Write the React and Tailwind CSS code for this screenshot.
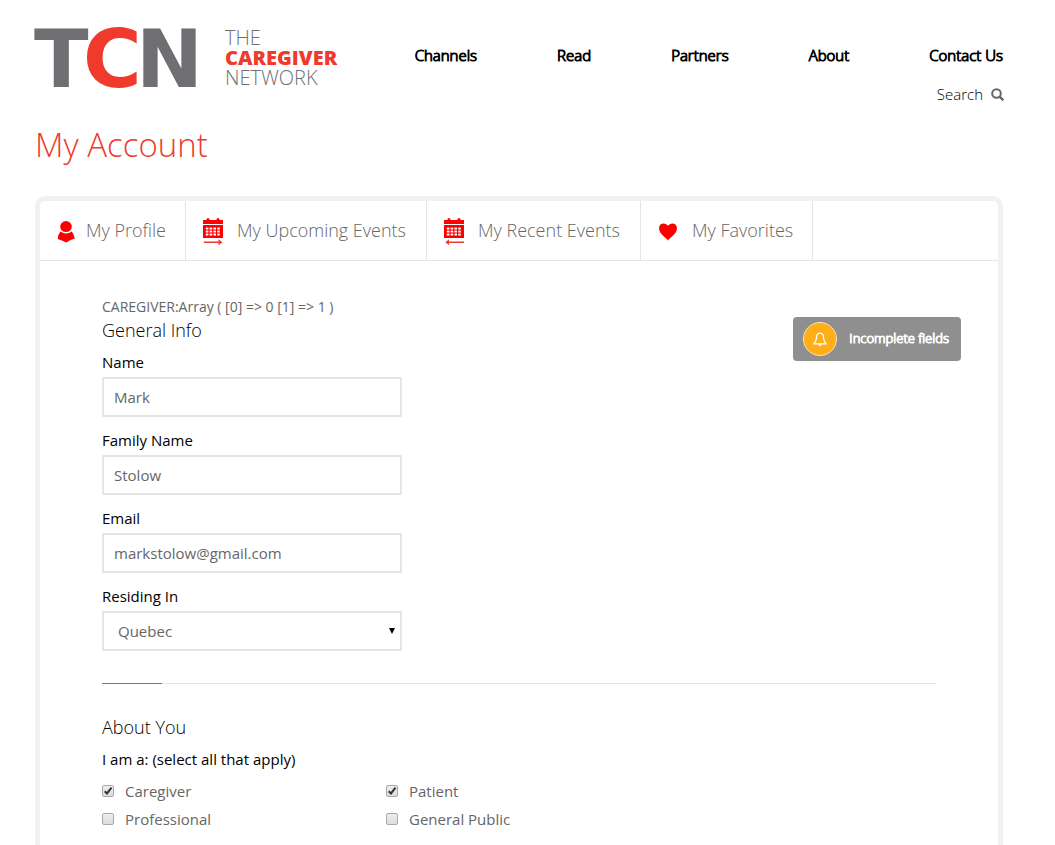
import React from "react";

const NAV = ["Channels", "Read", "Partners", "About", "Contact Us"];

function Logo() {
  return (
    <a href="#" className="flex items-start" aria-label="TCN The Caregiver Network">
      <svg
        width="190"
        height="60"
        viewBox="0 0 190 60"
        className="overflow-visible font-['DejaVu_Sans',sans-serif] text-[80px] font-bold"
        fill="#6f6f73"
      >
        <text x="-1" y="59">T</text>
        <text x="101" y="59">N</text>
        <text x="48" y="59" fill="#f03a2b">C</text>
      </svg>
      <span className="flex flex-col text-[20px] leading-[20px] font-light text-[#6f6f73]">
        <span>THE</span>
        <span className="font-extrabold text-[#f03a2b]">CAREGIVER</span>
        <span>NETWORK</span>
      </span>
    </a>
  );
}

function PersonIcon() {
  return (
    <svg width="18" height="24" viewBox="0 0 18 24" fill="#ff0000">
      <ellipse cx="9" cy="6.600" rx="5.800" ry="5.500" />
      <path d="M3.400 11.600 Q9 15.400 14.700 11.600 Q16.900 14 17.900 18.600 Q13.900 19.800 9.200 22.600 Q4.600 20.200 .7 19 Q1.200 14 3.400 11.600Z" />
    </svg>
  );
}

function CalendarIcon({ back }) {
  const cells = [];
  for (let r = 0; r < 3; r++) {
    for (let c = 0; c < 4; c++) {
      cells.push(<rect key={`${r}-${c}`} x={2.8 + c * 3.8} y={9.6 + r * 3} width="2.600" height="1.900" fill="#fff" />);
    }
  }
  return (
    <svg width="20" height="28" viewBox="0 0 20 28" fill="#ff0000">
      <path d="M0 2h3.500V1.500a1.500 1.500 0 0 1 3 0V2h7V1.500a1.500 1.500 0 0 1 3 0V2H20v4H0z" />
      <path d="M0 7h20v13H0z" />
      {cells}
      {back ? (
        <path fill="#f03a2b" d="M5 21.200v2.300h15v1.400H5v2.300L1.300 24.200z" />
      ) : (
        <path fill="#f03a2b" d="M15.500 21.200v2.300H.8v1.400h14.700v2.300l3.900-3z" />
      )}
    </svg>
  );
}

function HeartIcon() {
  return (
    <svg width="18" height="18" viewBox="0 0 18 18" fill="#ff0000">
      <path d="M9 17.500 C7.500 15 0 11 0 5.300 C0 2.300 2 .4 4.500 .4 C6.500 .4 8.200 1.400 9 3 C9.800 1.400 11.500 .4 13.500 .4 C16 .4 18 2.300 18 5.300 C18 11 10.500 15 9 17.500Z" />
    </svg>
  );
}

const TABS = [
  { label: "My Profile", icon: <PersonIcon />, pad: "gap-[11px] pr-[19px] pl-[17px]" },
  { label: "My Upcoming Events", icon: <CalendarIcon />, pad: "gap-[14px] pr-5 pl-[17px]" },
  { label: "My Recent Events", icon: <CalendarIcon back />, pad: "gap-[14px] pr-5 pl-[17px]" },
  { label: "My Favorites", icon: <HeartIcon />, pad: "gap-[15px] pr-[19px] pl-[18px]" },
];

function Field({ id, label, children }) {
  return (
    <div className="mb-3 flex w-[300px] flex-col">
      <label htmlFor={id} className="h-[26px] text-[15px] leading-[22px] text-black">
        {label}
      </label>
      {children}
    </div>
  );
}

const CONTROL =
  "h-10 w-full rounded-none border-2 border-[#e5e5e5] bg-white text-[15px] text-[#666] outline-none";

function Check({ id, label, checked }) {
  return (
    <div className="flex h-7 items-center">
      <span className="relative flex size-3">
        <input
          id={id}
          type="checkbox"
          defaultChecked={checked}
          className="peer size-3 appearance-none rounded-[2px] border border-[#a9a9a9] bg-linear-to-b from-[#eee] to-[#dcdcdc]"
        />
        <svg
          viewBox="0 0 12 12"
          className="pointer-events-none absolute inset-0 hidden size-3 peer-checked:block"
          fill="none"
          stroke="#333"
          strokeWidth="2"
        >
          <path d="M2.700 6.200 L5 8.400 L9.500 2.600" />
        </svg>
      </span>
      <label htmlFor={id} className="pl-[11px] text-[15px] leading-[22px] text-[#666]">
        {label}
      </label>
    </div>
  );
}

export default function App() {
  return (
    <div className="h-screen overflow-hidden bg-white pr-[52px] pl-[35px] font-['Open_Sans',sans-serif] text-[#666]">
      <header className="flex items-start justify-between pt-7">
        <Logo />
        <div className="flex flex-col items-end pt-[15px]">
          <nav className="flex gap-20 text-[15px] leading-6 font-light text-black [-webkit-text-stroke:1px_#000]">
            {NAV.map((n) => (
              <a key={n} href="#">
                {n}
              </a>
            ))}
          </nav>
          <button type="button" className="mt-[15px] -mr-px flex items-center gap-2 text-[15px] leading-6 font-light text-black">
            Search
            <svg width="13" height="13" viewBox="0 0 13 13" fill="none" stroke="#666" strokeWidth="2">
              <circle cx="5.500" cy="5.500" r="4.300" />
              <path d="M8.600 8.600 L12.300 12.300" strokeWidth="2.400" />
            </svg>
          </button>
        </div>
      </header>

      <h1 className="mt-[14px] text-[33px] leading-[50px] font-light text-[#f03a2b]">My Account</h1>

      <main className="mt-[26px] rounded-t-[10px] border-[5px] border-b-0 border-[#f1f1f1] pb-10">
        <nav className="flex h-[60px] border-b border-[#e5e5e5] text-[18px] font-light">
          {TABS.map((t) => (
            <a key={t.label} href="#" className={`flex items-center border-r border-[#e5e5e5] ${t.pad}`}>
              <span className="mt-0.5">{t.icon}</span>
              <span>{t.label}</span>
            </a>
          ))}
        </nav>

        <div className="pr-[62px] pl-[62px] pt-9">
          <div className="flex items-start justify-between">
            <div>
              <p className="text-[14px] leading-5">CAREGIVER:Array ( [0] =&gt; 0 [1] =&gt; 1 )</p>
              <h2 className="mb-2 text-[18px] leading-[26px] font-light text-black">General Info</h2>
              <Field id="name" label="Name">
                <input id="name" defaultValue="Mark" className={`${CONTROL} px-[10px]`} />
              </Field>
              <Field id="family" label="Family Name">
                <input id="family" defaultValue="Stolow" className={`${CONTROL} px-[10px]`} />
              </Field>
              <Field id="email" label="Email">
                <input id="email" type="email" defaultValue="markstolow@gmail.com" className={`${CONTROL} px-[10px]`} />
              </Field>
              <Field id="residing" label="Residing In">
                <div className="relative">
                  <select id="residing" className={`${CONTROL} appearance-none px-[14px]`}>
                    <option>Quebec</option>
                  </select>
                  <svg viewBox="0 0 6 6" className="pointer-events-none absolute top-[17px] right-[7px] size-[6px]">
                    <path d="M0 0H6L3 6Z" fill="#000" />
                  </svg>
                </div>
              </Field>
            </div>
            <button
              type="button"
              className="mt-5 -mr-[25px] flex h-11 items-center gap-3 rounded-[4px] bg-[#8f8f8f] pr-3 pl-[10px] text-[13px] font-light text-white [-webkit-text-stroke:1px_#fff]"
            >
              <span className="flex size-[34px] items-center justify-center rounded-full border border-[#fbe3b5] bg-[#ffae17]">
                <svg width="14" height="15" viewBox="0 0 14 15" fill="none" stroke="#fff" strokeWidth="1.300">
                  <path d="M7 1.200 C4.300 1.200 3.600 3.300 3.500 5.500 C3.400 9 2.300 9.800 1 11.800 H13 C11.700 9.800 10.600 9 10.500 5.500 C10.400 3.300 9.700 1.200 7 1.200Z" />
                  <path d="M5.300 12.500 Q7 15.500 8.700 12.500Z" fill="#fff" strokeWidth=".6" />
                </svg>
              </span>
              Incomplete fields
            </button>
          </div>

          <div className="mt-5 h-px bg-[#e5e5e5]">
            <div className="h-px w-[60px] bg-[#f04e16]" />
          </div>

          <h2 className="mt-[30px] text-[18px] leading-[26px] font-light text-black">About You</h2>
          <fieldset>
            <legend className="pt-[8px] text-[15px] leading-[22px] text-black">I am a: (select all that apply)</legend>
            <div className="mt-[7px] grid w-[568px] grid-cols-2">
              <Check id="caregiver" label="Caregiver" checked />
              <Check id="patient" label="Patient" checked />
              <Check id="professional" label="Professional" />
              <Check id="public" label="General Public" />
            </div>
          </fieldset>
        </div>
      </main>
    </div>
  );
}
